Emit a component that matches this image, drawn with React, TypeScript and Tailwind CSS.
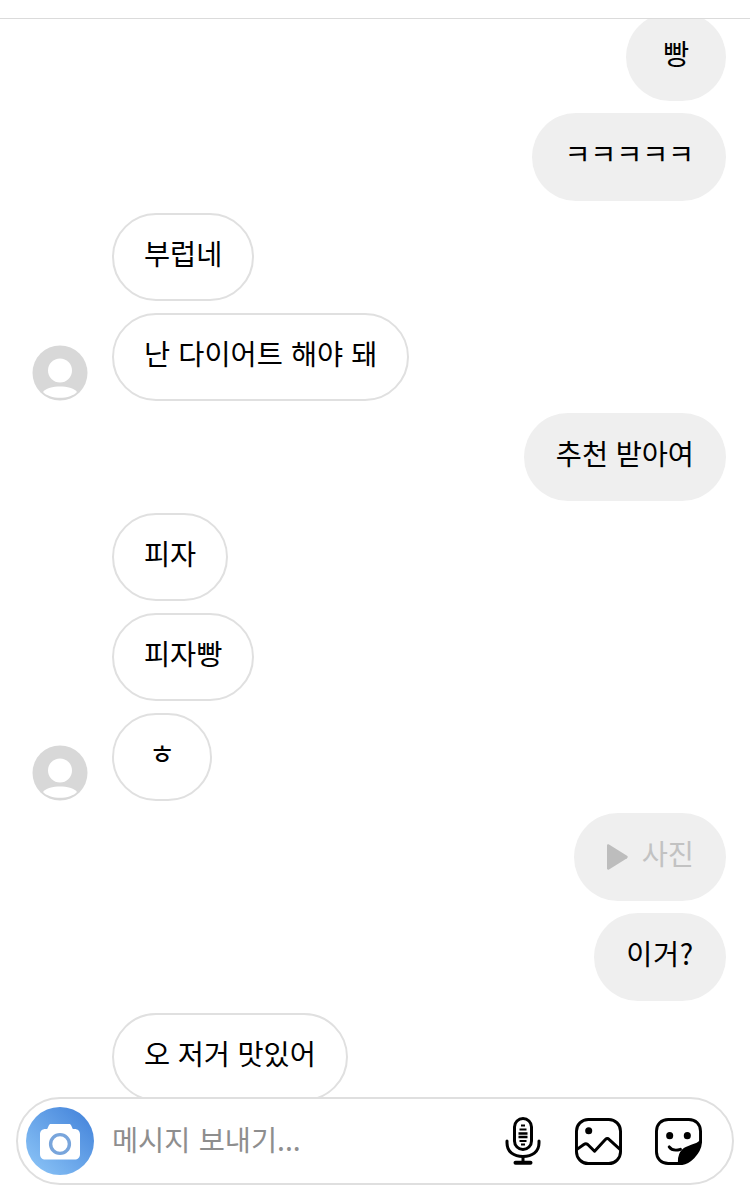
const font = { fontFamily: '"Noto Sans CJK KR", "Noto Sans", sans-serif', wordSpacing: '1.2px' };

function Avatar({ id }: { id: string }) {
  return (
    <svg width="56" height="56" viewBox="0 0 56 56" className="shrink-0">
      <defs>
        <clipPath id={id}>
          <circle cx="28" cy="28" r="28" />
        </clipPath>
      </defs>
      <circle cx="28" cy="28" r="27.5" fill="#d8d8d8" />
      <g clipPath={`url(#${id})`}>
        <circle cx="28" cy="25.5" r="12" fill="#ffffff" />
        <path d="M11 47 C14 43 21 41.5 28 41.5 C35 41.5 42 43 45 47 C42 50.5 35 52.8 28 52.8 C21 52.8 14 50.5 11 47 Z" fill="#ffffff" />
      </g>
    </svg>
  );
}

function Received({ text, avatar }: { text: string; avatar?: string }) {
  return (
    <div className="flex items-end pl-8 gap-6">
      <div className="w-14 shrink-0">{avatar && <Avatar id={avatar} />}</div>
      <div className="h-[88px] min-w-[100px] px-[30px] flex items-center justify-center rounded-[44px] border-2 border-[#e0e0e0] bg-white text-[28.4px] text-black whitespace-pre">
        <span className="-mt-[7px]">{text}</span>
      </div>
    </div>
  );
}

function Sent({ children }: { children: React.ReactNode }) {
  return (
    <div className="flex justify-end pr-6">
      <div className="h-[88px] min-w-[100px] px-8 flex items-center justify-center rounded-[44px] bg-[#efefef] text-[28.4px] text-black whitespace-pre">
        {children}
      </div>
    </div>
  );
}

function CameraIcon() {
  return (
    <svg width="42" height="37" viewBox="0 0 42 37" className="-ml-px">
      <path
        d="M12 1 C10.8 1 10.2 1.6 9.8 2.4 L8.2 6 L6.5 6 C3 6 1 8.2 1 11.5 L1 31 C1 34.5 3 36.5 6.5 36.5 L35.5 36.5 C39 36.5 41 34.5 41 31 L41 11.5 C41 8.2 39 6 35.5 6 L33.8 6 L32.2 2.4 C31.8 1.6 31.2 1 30 1 Z"
        fill="#ffffff"
      />
      <circle cx="21" cy="21" r="9.4" fill="none" stroke="#78a5dc" strokeWidth="3.4" />
    </svg>
  );
}

function MicIcon() {
  return (
    <svg width="36" height="48" viewBox="0 0 36 48" fill="none" stroke="#000" strokeWidth="3" strokeLinecap="round" className="mr-[1.5px]">
      <rect x="9.5" y="1.5" width="17" height="31" rx="8.5" />
      <path d="M16 8.5H20M14.5 12.5H21.5" strokeWidth="1.8" strokeLinecap="butt" />
      <path d="M13.5 16.5H22.5M13.5 20H22.5" strokeWidth="2.4" strokeLinecap="butt" />
      <path d="M14.5 24H21.5M16 27.5H20" strokeWidth="1.8" strokeLinecap="butt" />
      <path d="M2 24 V26 C2 35 9 39.5 18 39.5 C27 39.5 34 35 34 26 V24" />
      <path d="M18 40 V45" />
      <path d="M10.5 45.8 H25.5" strokeWidth="4" />
    </svg>
  );
}

function ImageIcon() {
  return (
    <svg width="47" height="47" viewBox="0 0 48 48" fill="none" stroke="#000" strokeWidth="3">
      <rect x="1.5" y="1.5" width="45" height="45" rx="12" />
      <circle cx="14" cy="13" r="3.6" fill="#000" stroke="none" />
      <path d="M2 32 L9 27 C10.5 26 11.5 26 13 27 L20 34 L31 22 C32.5 20.5 33.5 20.5 35 22 L46 32" strokeLinejoin="round" />
    </svg>
  );
}

function StickerIcon() {
  return (
    <svg width="47" height="47" viewBox="0 0 48 48" fill="none" stroke="#000" strokeWidth="3">
      <path d="M25 46.5 H13.5 C6.5 46.5 1.5 41.5 1.5 34.5 V13.5 C1.5 6.5 6.5 1.5 13.5 1.5 H34.5 C41.5 1.5 46.5 6.5 46.5 13.5 V24 Z" strokeLinejoin="round" />
      <circle cx="15" cy="18" r="3.6" fill="#000" stroke="none" />
      <circle cx="33" cy="18" r="3.6" fill="#000" stroke="none" />
      <path d="M14.5 29.5 C17 33 21 33.5 26 32" strokeLinecap="round" />
      <path d="M25 46.5 C24.5 41 26 36 29 33 C33 29.5 39 29 46.5 25 C46 31 43 36 39 40 C34 45 29 47 25 46.5 Z" fill="#000" strokeLinejoin="round" />
    </svg>
  );
}

export default function App() {
  return (
    <div className="relative w-[750px] h-[1201px] bg-white flex flex-col overflow-hidden" style={font}>
      <div className="h-[19px] shrink-0 border-b border-[#dbdbdb]" />
      <div className="h-[1078px] shrink-0 overflow-hidden">
        <div className="flex flex-col gap-3 -mt-[6px]">
          <Sent><span className="-mt-[7px]">빵</span></Sent>
          <Sent><span className="-mt-[7px] tracking-[-0.2px]">ㅋㅋㅋㅋㅋ</span></Sent>
          <Received text="부럽네" />
          <div className="[word-spacing:1.8px]">
            <Received text="난 다이어트 해야 돼" avatar="avatar-a" />
          </div>
          <Sent><span className="-mt-[7px]">추천 받아여</span></Sent>
          <Received text="피자" />
          <Received text="피자빵" />
          <Received text="ㅎ" avatar="avatar-b" />
          <Sent>
            <span className="flex items-center gap-[14px] text-[#c2c2c2] -mt-[7px]">
              <svg width="22" height="26" viewBox="0 0 22 26" className="mt-[7px]">
                <path d="M1 1.5 C1 0.5 2 0 3 0.6 L21 11.8 C22 12.5 22 13.5 21 14.2 L3 25.4 C2 26 1 25.5 1 24.5 Z" fill="#bdbdbd" />
              </svg>
              사진
            </span>
          </Sent>
          <Sent><span className="-mt-[7px] tracking-[0.7px]">이거?</span></Sent>
          <Received text="오 저거 맛있어" />
        </div>
      </div>
      <div className="px-4">
        <div className="h-[88px] w-[718px] rounded-[44px] border-2 border-[#dfdfdf] bg-white flex items-center pl-2 pr-[30px]">
          <div className="w-[68px] h-[68px] rounded-full flex items-center justify-center shrink-0 bg-gradient-to-tr from-[#90c8f8] to-[#3f7fd8]">
            <CameraIcon />
          </div>
          <div className="ml-[18px] flex-1 text-[28.4px] text-[#8e8e8e] -mt-[3px] [word-spacing:2px]">메시지 보내기...</div>
          <div className="flex items-center gap-[33px]">
            <MicIcon />
            <ImageIcon />
            <StickerIcon />
          </div>
        </div>
      </div>
    </div>
  );
}
